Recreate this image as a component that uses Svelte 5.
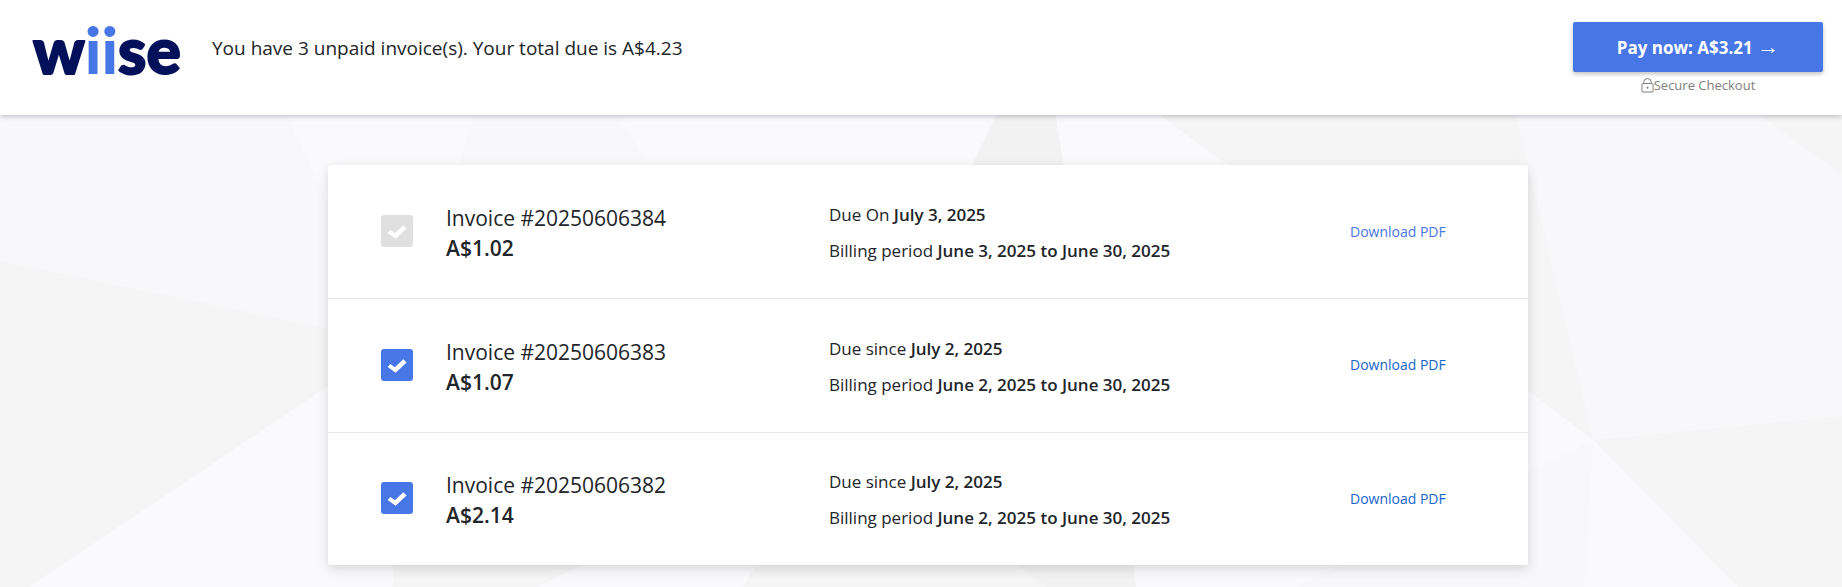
<script lang="ts">
  type Invoice = {
    number: string;
    amount: string;
    dueLabel: string;
    dueDate: string;
    period: string;
    locked: boolean;
    selected: boolean;
  };

  let invoices: Invoice[] = $state([
    {
      number: '20250606384',
      amount: 'A$1.02',
      dueLabel: 'Due On',
      dueDate: 'July 3, 2025',
      period: 'June 3, 2025 to June 30, 2025',
      locked: true,
      selected: true
    },
    {
      number: '20250606383',
      amount: 'A$1.07',
      dueLabel: 'Due since',
      dueDate: 'July 2, 2025',
      period: 'June 2, 2025 to June 30, 2025',
      locked: false,
      selected: true
    },
    {
      number: '20250606382',
      amount: 'A$2.14',
      dueLabel: 'Due since',
      dueDate: 'July 2, 2025',
      period: 'June 2, 2025 to June 30, 2025',
      locked: false,
      selected: true
    }
  ]);
</script>

<div class="page">
  <svg class="backdrop" viewBox="0 0 1842 587" preserveAspectRatio="xMidYMin slice" aria-hidden="true">
    <rect width="1842" height="587" fill="#fafafc" />
    <g fill="#f8f8fb">
      <polygon points="0,80 271,80 287,115 340,231 340,331 0,261" />
      <polygon points="486,80 596,80 658,180 454,180" />
      <polygon points="1508,80 1758,115 1842,174 1842,416 1593,440" />
      <polygon points="1593,440 1584,587 1295,587 1340,565" />
    </g>
    <g fill="#f5f5f5">
      <polygon points="0,261 340,331 340,378 29,587 0,587" />
      <polygon points="1112,80 1508,80 1593,440 1500,369 1248,180" />
      <polygon points="1708,80 1842,80 1842,174 1758,115" />
      <polygon points="1593,440 1842,416 1842,587 1738,587" />
      <polygon points="393,540 631,540 581,565 537,587 393,587" />
      <polygon points="770,540 1132,540 1136,587 743,587" />
    </g>
    <g fill="#f2f2f2">
      <polygon points="1013,80 1050,80 1066,180 965,180" />
      <polygon points="983,540 1130,540 1136,587 1047,587" />
    </g>
  </svg>

  <header class="topbar">
    <a class="logo" href="/" aria-label="wiise">
      <svg viewBox="0 0 149 56" width="149" height="56">
        <text x="0" y="52">w<tspan class="accent">ii</tspan>se</text>
      </svg>
    </a>
    <p class="summary">You have 3 unpaid invoice(s). Your total due is A$4.23</p>
    <div class="checkout">
      <button class="pay" type="button">Pay now: A$3.21 <span class="arrow">→</span></button>
      <p class="secure">
        <svg viewBox="0 0 13 15" width="13" height="15" fill="none" stroke="#808080" aria-hidden="true">
          <rect x="1" y="5.5" width="11" height="8.5" rx="0.5" />
          <path d="M2.7 5.5V4.3a3.8 3.8 0 0 1 7.6 0v1.2" />
          <path d="M5.5 9.7h2M6.5 8.7v2" />
        </svg>
        <span>Secure Checkout</span>
      </p>
    </div>
  </header>

  <main>
    <ul class="card">
      {#each invoices as invoice (invoice.number)}
        <li class="row">
          <span class="check">
            <input
              type="checkbox"
              id="invoice-{invoice.number}"
              disabled={invoice.locked}
              bind:checked={invoice.selected}
            />
            <svg viewBox="0 0 32 32" aria-hidden="true">
              <path d="M6.6 17.9 9.4 15 13.9 18.3 22.3 10.3 25.6 13.5 14.6 23.8Z" fill="#fff" />
            </svg>
          </span>
          <label class="title" for="invoice-{invoice.number}">
            <span>Invoice #{invoice.number}</span>
            <strong>{invoice.amount}</strong>
          </label>
          <div class="dates">
            <p>{invoice.dueLabel} <strong>{invoice.dueDate}</strong></p>
            <p>Billing period <strong>{invoice.period}</strong></p>
          </div>
          <a class="download" class:light={invoice.locked} href="#{invoice.number}">Download PDF</a>
        </li>
      {/each}
    </ul>
  </main>
</div>

<style>
  :global(body) {
    margin: 0;
    background: #fafafc;
  }

  .page {
    position: relative;
    min-height: 100vh;
    box-sizing: border-box;
    overflow: hidden;
    font-family: 'Segoe UI', 'Open Sans', 'Noto Sans', sans-serif;
    color: #212529;
  }

  .backdrop {
    position: absolute;
    inset: 0;
    width: 100%;
    height: 100%;
  }

  p {
    margin: 0;
  }

  strong {
    font-weight: 600;
  }

  .topbar {
    position: relative;
    display: flex;
    align-items: flex-start;
    min-height: 115px;
    box-sizing: border-box;
    padding: 22px 19px 16px 33px;
    background: #fff;
    box-shadow: 0 1px 5px rgba(30, 30, 60, 0.3);
  }

  .logo svg {
    display: block;
    overflow: visible;
  }

  .logo text {
    font-family: Lato, sans-serif;
    font-size: 64px;
    font-weight: 900;
    fill: #03115a;
    stroke: #03115a;
    stroke-width: 2px;
    stroke-linejoin: round;
  }

  .logo .accent {
    fill: #4776e6;
    stroke: none;
  }

  .summary {
    flex: 1;
    margin-left: 30px;
    font-size: 19px;
    line-height: 52px;
  }

  .checkout {
    width: 250px;
  }

  .pay {
    display: block;
    width: 100%;
    height: 50px;
    padding: 0;
    border: 0;
    border-radius: 2px;
    background: #4776e6;
    box-shadow: 0 2px 4px rgba(0, 0, 0, 0.25);
    color: #fff;
    font: inherit;
    font-size: 17px;
    font-weight: 700;
    cursor: pointer;
  }

  .arrow {
    font-family: 'Liberation Sans', sans-serif;
    font-size: 22px;
    font-weight: 700;
    line-height: 20px;
  }

  .secure {
    display: flex;
    align-items: center;
    justify-content: center;
    margin-top: 3px;
    font-size: 13px;
    line-height: 20px;
    color: #808080;
  }

  main {
    position: relative;
    padding: 50px 0 22px 14px;
  }

  .card {
    display: grid;
    grid-auto-rows: 1fr;
    max-width: 1200px;
    min-height: 400px;
    margin: 0 auto;
    padding: 0;
    list-style: none;
    background: #fff;
    border-radius: 3px;
    box-shadow: 0 4px 12px rgba(0, 0, 0, 0.14);
  }

  .row {
    display: grid;
    grid-template-columns: 65px 383fr 521fr 178fr;
    align-items: center;
    padding: 0 0 1px 53px;
  }

  .row + .row {
    border-top: 1px solid #e9e9eb;
  }

  .check {
    display: grid;
    width: 32px;
    height: 32px;
  }

  .check input,
  .check svg {
    grid-area: 1 / 1;
    width: 32px;
    height: 32px;
    margin: 0;
  }

  .check input {
    appearance: none;
    border-radius: 3px;
    background: #e0e0e0;
  }

  .check input:checked:not(:disabled) {
    background: #4776e6;
  }

  .check svg {
    pointer-events: none;
  }

  .title,
  .dates {
    padding-top: 4px;
  }

  .title {
    font-size: 21px;
    line-height: 30px;
  }

  .title span,
  .title strong {
    display: block;
  }

  .dates {
    font-size: 17px;
    line-height: 36px;
  }

  .download {
    font-size: 14px;
    color: #1565c9;
    text-decoration: none;
  }

  .download.light {
    color: #4776e6;
  }
</style>
